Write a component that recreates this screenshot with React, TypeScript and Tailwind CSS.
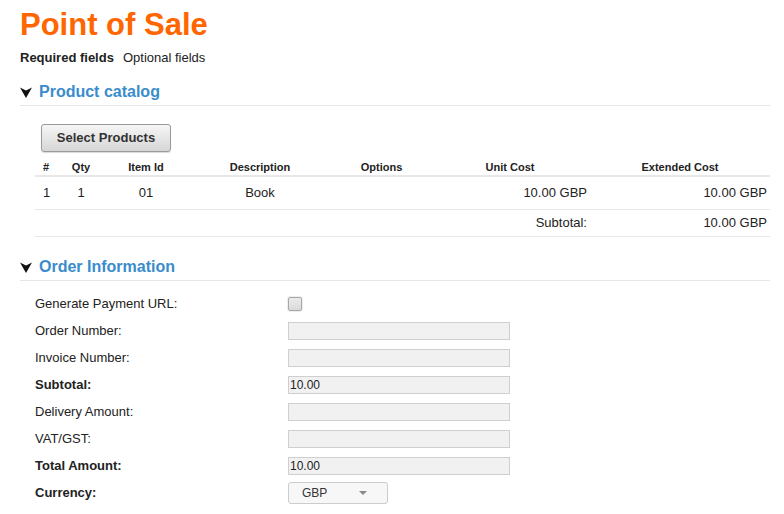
import React from 'react';

const font = { fontFamily: '"Liberation Sans", Arial, sans-serif' };

const Arrow: React.FC = () => (
  <svg width="12" height="12" viewBox="0 0 12 12" className="mr-[7px] shrink-0">
    <path d="M0 1.5 L6 4.5 L12 1.5 L6 12 Z" fill="#111" />
  </svg>
);

const SectionHeader: React.FC<{ title: string }> = ({ title }) => (
  <div className="flex items-center h-[20px] border-b border-[#e6e6e6] box-content pb-[3px]">
    <Arrow />
    <h2 className="text-[16px] leading-[20px] font-bold text-[#3a8ccc]">{title}</h2>
  </div>
);

const fields = [
  { label: 'Generate Payment URL:', type: 'checkbox' },
  { label: 'Order Number:', type: 'text', value: '' },
  { label: 'Invoice Number:', type: 'text', value: '' },
  { label: 'Subtotal:', type: 'text', value: '10.00', bold: true },
  { label: 'Delivery Amount:', type: 'text', value: '' },
  { label: 'VAT/GST:', type: 'text', value: '' },
  { label: 'Total Amount:', type: 'text', value: '10.00', bold: true },
  { label: 'Currency:', type: 'select', bold: true },
];

const App: React.FC = () => {
  return (
    <div className="w-[784px] h-[514px] bg-white pl-[20px] pr-[14px] pt-[7px] text-[#222] overflow-hidden" style={font}>
      {/* Title */}
      <h1 className="text-[31px] leading-[36px] font-bold text-[#ff6600]">Point of Sale</h1>
      <div className="mt-[7px] text-[13px] leading-[16px] flex gap-[9px]">
        <span className="font-bold">Required fields</span>
        <span>Optional fields</span>
      </div>

      {/* Product catalog */}
      <div className="mt-[16px]">
        <SectionHeader title="Product catalog" />
      </div>
      <div className="pl-[15px]">
        <button className="mt-[18px] ml-[6px] w-[130px] h-[28px] rounded-[3px] border border-[#9a9a9a] bg-gradient-to-b from-[#f6f6f6] to-[#d6d6d6] text-[13px] font-bold text-[#333] shadow-[0_1px_1px_rgba(0,0,0,0.15)]">
          Select Products
        </button>
        <table className="mt-[7px] w-[735px] table-fixed border-collapse text-[13px]">
          <colgroup>
            <col className="w-[22px]" />
            <col className="w-[48px]" />
            <col className="w-[82px]" />
            <col className="w-[146px]" />
            <col className="w-[97px]" />
            <col className="w-[160px]" />
            <col className="w-[180px]" />
          </colgroup>
          <thead>
            <tr className="h-[16px] text-[11px] leading-[16px] font-bold border-b-2 border-[#e8e8e8]">
              <th className="text-left pl-[8px] font-bold">#</th>
              <th className="text-center font-bold">Qty</th>
              <th className="text-center font-bold">Item Id</th>
              <th className="text-center font-bold">Description</th>
              <th className="text-center font-bold">Options</th>
              <th className="text-center font-bold">Unit Cost</th>
              <th className="text-center font-bold">Extended Cost</th>
            </tr>
          </thead>
          <tbody>
            <tr className="h-[33px] border-b border-[#e8e8e8]">
              <td className="pl-[8px]">1</td>
              <td className="text-center">1</td>
              <td className="text-center">01</td>
              <td className="text-center">Book</td>
              <td></td>
              <td className="text-right pr-[3px]">10.00 GBP</td>
              <td className="text-right pr-[3px]">10.00 GBP</td>
            </tr>
            <tr className="h-[27px] border-b border-[#e8e8e8]">
              <td colSpan={5}></td>
              <td className="text-right pr-[3px]">Subtotal:</td>
              <td className="text-right pr-[3px]">10.00 GBP</td>
            </tr>
          </tbody>
        </table>
      </div>

      {/* Order Information */}
      <div className="mt-[20px]">
        <SectionHeader title="Order Information" />
      </div>
      <div className="mt-[10px] pl-[15px]">
        {fields.map((f) => (
          <div key={f.label} className="h-[27px] flex items-center">
            <label className={`w-[253px] text-[13px] ${f.bold ? 'font-bold' : ''}`}>{f.label}</label>
            {f.type === 'checkbox' && (
              <span className="w-[14px] h-[14px] rounded-[2px] border border-[#a8a8a8] bg-gradient-to-b from-[#ececec] to-[#d9d9d9] shadow-[0_0_0_1px_#eee]" />
            )}
            {f.type === 'text' && (
              <input
                readOnly
                value={f.value}
                className="w-[222px] h-[18px] border border-[#cfcfcf] bg-[#f1f1f1] px-[1px] text-[12px] text-[#222] outline-none"
                style={font}
              />
            )}
            {f.type === 'select' && (
              <div className="w-[100px] h-[22px] rounded-[3px] border border-[#cccccc] bg-[#f7f7f7] flex items-center justify-between pl-[13px] pr-[20px] text-[12px] text-[#333]">
                <span>GBP</span>
                <svg width="8" height="4" viewBox="0 0 8 4">
                  <path d="M0 0 L8 0 L4 4 Z" fill="#888" />
                </svg>
              </div>
            )}
          </div>
        ))}
      </div>
    </div>
  );
};

export default App;
